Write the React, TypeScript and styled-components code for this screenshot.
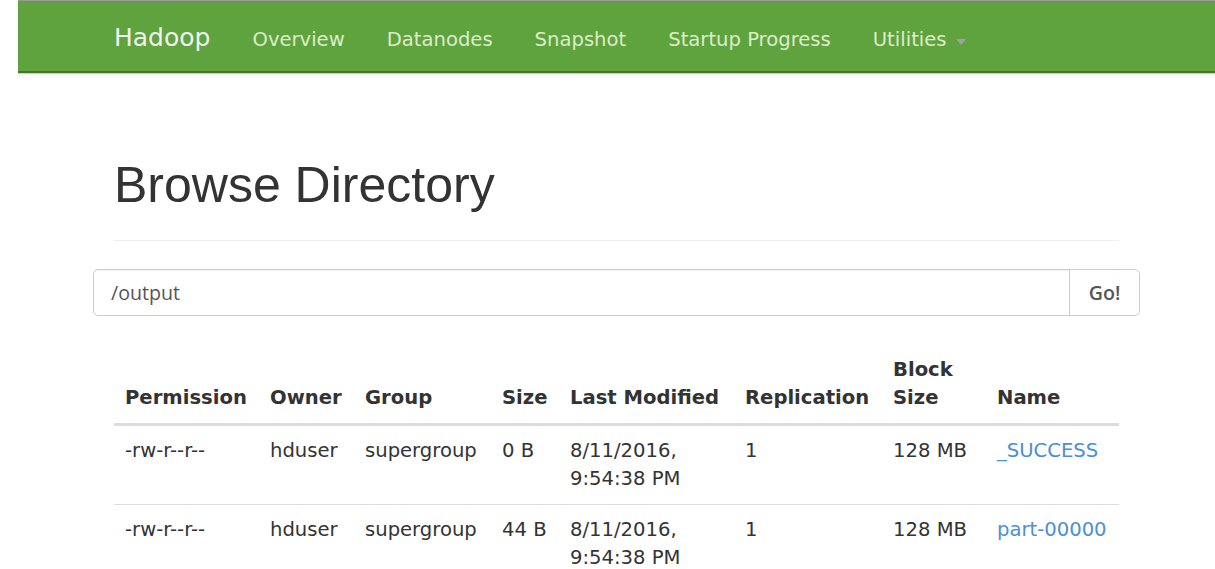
import React from "react";
import styled, { createGlobalStyle } from "styled-components";

const GlobalStyle = createGlobalStyle`
  html, body {
    margin: 0;
    padding: 0;
    background: #ffffff;
  }
  body {
    font-family: "DejaVu Sans", "Liberation Sans", sans-serif;
    color: #333333;
  }
`;

const Page = styled.div`
  margin-left: 18px;
  width: 1197px;
`;

const NavBar = styled.nav`
  background: #5fa33e;
  border-top: 1px solid #9a9a9a;
  border-bottom: 2px solid #3f7a25;
  box-shadow: 0 1px 1px #d0d0d0;
  height: 70px;
`;

const Container = styled.div`
  width: 1005px;
  padding: 0 21px;
  margin: 0 auto;
`;

const NavInner = styled(Container)`
  display: flex;
  align-items: flex-start;
  height: 70px;
`;

const Brand = styled.a`
  font-size: 25px;
  line-height: 28px;
  padding: 23px 21px 0 0;
  color: #f2f2f2;
  text-decoration: none;
`;

const NavLink = styled.a`
  font-size: 19.6px;
  line-height: 28px;
  padding: 25px 21px 0;
  color: #dcedc8;
  text-decoration: none;
  display: flex;
  align-items: center;
`;

const Caret = styled.span`
  display: inline-block;
  width: 0;
  height: 0;
  margin-left: 9px;
  margin-top: 3px;
  border-top: 6px solid #a79cab;
  border-left: 5.5px solid transparent;
  border-right: 5.5px solid transparent;
`;

const PageHeader = styled.div`
  margin-top: 85px;
  padding-bottom: 13px;
  border-bottom: 1px solid #eeeeee;
`;

const Title = styled.h1`
  margin: 0 0 14px;
  font-family: "Liberation Sans", Arial, sans-serif;
  font-weight: 500;
  font-size: 50px;
  line-height: 55px;
  color: #333333;
`;

const Row = styled.div`
  margin: 28px -21px 0;
`;

const InputGroup = styled.div`
  display: flex;
  border: 1px solid #cccccc;
  border-radius: 5px;
  height: 45px;
  box-shadow: inset 0 1px 1px rgba(0, 0, 0, 0.06);
`;

const PathInput = styled.input`
  flex: 1;
  border: none;
  outline: none;
  background: transparent;
  padding: 0 17px;
  font-family: "Open Sans", "Noto Sans", sans-serif;
  font-size: 19.6px;
  color: #555555;
`;

const GoButton = styled.button`
  border: none;
  border-left: 1px solid #cccccc;
  background: #ffffff;
  border-radius: 0 5px 5px 0;
  width: 70px;
  font-family: "Open Sans", "Noto Sans", sans-serif;
  font-weight: 600;
  font-size: 19.6px;
  color: #555555;
  padding: 0;
`;

const Table = styled.table`
  margin-top: 29px;
  width: 100%;
  border-collapse: collapse;
  table-layout: fixed;
  font-size: 19.6px;
  line-height: 28px;
`;

const Th = styled.th<{ $w: number }>`
  box-sizing: border-box;
  width: ${(p) => p.$w}px;
  text-align: left;
  vertical-align: bottom;
  font-weight: bold;
  padding: 11px;
  border-bottom: 3px solid #dddddd;
`;

const Td = styled.td`
  vertical-align: top;
  padding: 11px;
  border-bottom: 1px solid #dddddd;
`;

const FileLink = styled.a`
  color: #4a90d2;
  text-decoration: none;
`;

const columns: [string, number][] = [
  ["Permission", 145],
  ["Owner", 95],
  ["Group", 137],
  ["Size", 68],
  ["Last Modified", 175],
  ["Replication", 148],
  ["Block Size", 104],
  ["Name", 133],
];

const files = [
  { perm: "-rw-r--r--", owner: "hduser", group: "supergroup", size: "0 B", date: "8/11/2016,", time: "9:54:38 PM", rep: "1", block: "128 MB", name: "_SUCCESS" },
  { perm: "-rw-r--r--", owner: "hduser", group: "supergroup", size: "44 B", date: "8/11/2016,", time: "9:54:38 PM", rep: "1", block: "128 MB", name: "part-00000" },
];

export default function App() {
  return (
    <>
      <GlobalStyle />
      <Page>
        <NavBar>
          <NavInner>
            <Brand href="#">Hadoop</Brand>
            <NavLink href="#">Overview</NavLink>
            <NavLink href="#">Datanodes</NavLink>
            <NavLink href="#">Snapshot</NavLink>
            <NavLink href="#">Startup Progress</NavLink>
            <NavLink href="#">
              Utilities<Caret />
            </NavLink>
          </NavInner>
        </NavBar>
        <Container>
          <PageHeader>
            <Title>Browse Directory</Title>
          </PageHeader>
          <Row>
            <InputGroup>
              <PathInput defaultValue="/output" />
              <GoButton>Go!</GoButton>
            </InputGroup>
          </Row>
          <Table>
            <thead>
              <tr>
                {columns.map(([label, w]) => (
                  <Th key={label} $w={w}>
                    {label}
                  </Th>
                ))}
              </tr>
            </thead>
            <tbody>
              {files.map((f) => (
                <tr key={f.name}>
                  <Td>{f.perm}</Td>
                  <Td>{f.owner}</Td>
                  <Td>{f.group}</Td>
                  <Td>{f.size}</Td>
                  <Td>
                    {f.date}
                    <br />
                    {f.time}
                  </Td>
                  <Td>{f.rep}</Td>
                  <Td>{f.block}</Td>
                  <Td>
                    <FileLink href="#">{f.name}</FileLink>
                  </Td>
                </tr>
              ))}
            </tbody>
          </Table>
        </Container>
      </Page>
    </>
  );
}
